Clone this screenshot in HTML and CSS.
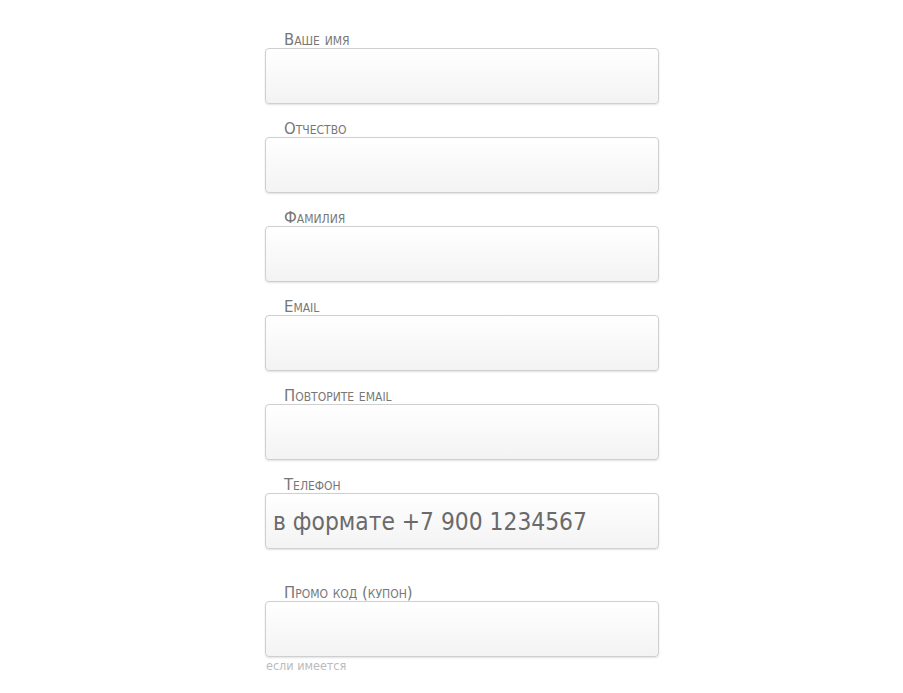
FILE: index.html
```html
<!DOCTYPE html>
<html lang="ru">
<head>
<meta charset="utf-8">
<link rel="stylesheet" href="styles.css">
</head>
<body>
<form class="form">
  <div class="field">
    <label class="label">Ваше имя</label>
    <input class="input" type="text">
  </div>
  <div class="field">
    <label class="label">Отчество</label>
    <input class="input" type="text">
  </div>
  <div class="field">
    <label class="label">Фамилия</label>
    <input class="input" type="text">
  </div>
  <div class="field">
    <label class="label">Email</label>
    <input class="input" type="text">
  </div>
  <div class="field">
    <label class="label">Повторите email</label>
    <input class="input" type="text">
  </div>
  <div class="field">
    <label class="label">Телефон</label>
    <input class="input" type="text" placeholder="в формате +7 900 1234567">
  </div>
  <div class="field field-promo">
    <label class="label">Промо код (купон)</label>
    <input class="input" type="text">
    <div class="hint">если имеется</div>
  </div>
</form>
</body>
</html>
```
FILE: styles.css
```css
html, body {
  margin: 0;
  padding: 0;
  background: #fff;
}
body {
  font-family: "DejaVu Sans Condensed", "DejaVu Sans", sans-serif;
}
.form {
  margin: 0 0 0 265px;
  padding-top: 31px;
  width: 394px;
}
.field {
  margin-bottom: 16px;
}
.field-promo {
  margin-top: 35px;
}
.label {
  display: block;
  height: 17px;
  line-height: 17px;
  padding-left: 19px;
  font-size: 16.5px;
  font-variant: small-caps;
  color: #777;
}
.input {
  display: block;
  box-sizing: border-box;
  width: 394px;
  height: 56px;
  margin: 0;
  padding: 0 7px;
  border: 1px solid #cfcfcf;
  border-radius: 4px;
  background: linear-gradient(#ffffff, #f3f3f3);
  box-shadow: 0 1px 2px rgba(0, 0, 0, 0.12);
  font-family: "DejaVu Sans Condensed", "DejaVu Sans", sans-serif;
  font-size: 24.3px;
  color: #555;
  outline: none;
}
.input::placeholder {
  color: #6a6a6a;
  opacity: 1;
}
.hint {
  margin-top: 2px;
  padding-left: 1px;
  font-size: 12.5px;
  line-height: 14px;
  color: #bbb;
}
```
